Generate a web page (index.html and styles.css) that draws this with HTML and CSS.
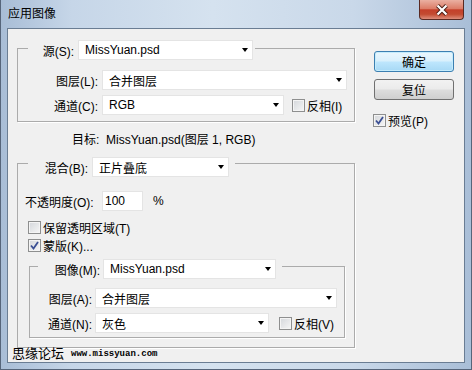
FILE: index.html
```html
<!DOCTYPE html>
<html lang="zh-CN">
<head>
    <meta charset="UTF-8">
    <meta name="viewport" content="width=device-width, initial-scale=1.0">
    <title>应用图像</title>
    <link rel="stylesheet" href="styles.css">
</head>
<body>

    <div class="window">
        <div class="titlebar">
            <span class="title">应用图像</span>
            <div class="close-btn">
                <svg width="14" height="12" viewBox="0 0 14 12">
                    <path d="M2.5 1.5 L11.5 10.5 M11.5 1.5 L2.5 10.5" stroke="#4a1f16" stroke-width="4"/>
                    <path d="M2.5 1.5 L11.5 10.5 M11.5 1.5 L2.5 10.5" stroke="#fff" stroke-width="2.2"/>
                </svg>
            </div>
        </div>

        <div class="frame">
            <div class="client">
                <div class="main">
                    <!-- 源 -->
                    <fieldset class="group group-source">
                        <legend class="legend-source">
                            <label class="legend-label label-source">源(S):</label>
                            <div class="dropdown dd-source"><span>MissYuan.psd</span></div>
                        </legend>
                        <div class="row">
                            <label class="row-label label-wide">图层(L):</label>
                            <div class="dropdown dd-layer"><span>合并图层</span></div>
                        </div>
                        <div class="row">
                            <label class="row-label label-wide">通道(C):</label>
                            <div class="dropdown dd-channel"><span>RGB</span></div>
                            <span class="checkbox"></span>
                            <span class="check-text">反相(I)</span>
                        </div>
                    </fieldset>

                    <div class="target">目标:&nbsp; MissYuan.psd(图层 1, RGB)</div>

                    <!-- 混合 -->
                    <fieldset class="group group-blend">
                        <legend class="legend-blend">
                            <label class="legend-label label-blend">混合(B):</label>
                            <div class="dropdown dd-blend"><span>正片叠底</span></div>
                        </legend>
                        <div class="row">
                            <label class="opacity-label">不透明度(O):</label>
                            <div class="textbox">100</div>
                            <span class="unit">%</span>
                        </div>
                        <div class="check-row">
                            <span class="checkbox"></span>
                            <span class="check-text">保留透明区域(T)</span>
                        </div>
                        <div class="check-row">
                            <span class="checkbox checked">
                                <svg width="9" height="9" viewBox="0 0 9 9"><path d="M1 4.5 L3.5 7.5 L8 1" fill="none" stroke="#3b4f94" stroke-width="1.8"/></svg>
                            </span>
                            <span class="check-text">蒙版(K)...</span>
                        </div>

                        <!-- 蒙版 -->
                        <fieldset class="group group-mask">
                            <legend class="legend-mask">
                                <label class="legend-label label-mask">图像(M):</label>
                                <div class="dropdown dd-image"><span>MissYuan.psd</span></div>
                            </legend>
                            <div class="row">
                                <label class="row-label label-narrow">图层(A):</label>
                                <div class="dropdown dd-mlayer"><span>合并图层</span></div>
                            </div>
                            <div class="row">
                                <label class="row-label label-narrow">通道(N):</label>
                                <div class="dropdown dd-mchannel"><span>灰色</span></div>
                                <span class="checkbox"></span>
                                <span class="check-text">反相(V)</span>
                            </div>
                        </fieldset>
                    </fieldset>
                </div>

                <div class="side">
                    <button class="btn btn-default">确定</button>
                    <button class="btn">复位</button>
                    <div class="check-row preview-row">
                        <span class="checkbox checked">
                            <svg width="9" height="9" viewBox="0 0 9 9"><path d="M1 4.5 L3.5 7.5 L8 1" fill="none" stroke="#3b4f94" stroke-width="1.8"/></svg>
                        </span>
                        <span class="check-text">预览(P)</span>
                    </div>
                </div>

                <!-- 水印 -->
                <div class="watermark">
                    <span class="wm-cn">思缘论坛</span>
                    <span class="wm-url">www.missyuan.com</span>
                </div>
            </div>
        </div>
    </div>

</body>
</html>
```

FILE: styles.css
```css
* {
    box-sizing: border-box;
}
body {
    margin: 0;
    font-family: "Liberation Sans", "Noto Sans CJK SC", sans-serif;
    font-size: 12px;
    color: #000;
}
.window {
    width: 472px;
    height: 370px;
    display: flex;
    flex-direction: column;
    background: linear-gradient(to right, #a8bdd6, #c6d6e8 15%, #d5e2ef 45%, #c9d8e9 75%, #a9bed7);
    border: 1px solid #56657a;
    border-top: none;
}
.titlebar {
    height: 28px;
    display: flex;
    align-items: center;
    padding-left: 7px;
    position: relative;
}
.title {
    font-size: 12px;
    line-height: 14px;
}
.close-btn {
    position: absolute;
    top: 0;
    right: 7px;
    width: 45px;
    height: 20px;
    border: 1px solid #5a2a22;
    border-top: none;
    border-radius: 0 0 4px 4px;
    background: linear-gradient(#eab0a2, #dc7d68 45%, #c4402a 52%, #c34b31 75%, #dd8d7a);
    display: flex;
    align-items: center;
    justify-content: center;
}
.frame {
    flex: 1;
    padding: 0 6px 6px 6px;
}
.client {
    height: 100%;
    border: 1px solid #6a7d93;
    background-color: #f0f0f0;
    display: flex;
    position: relative;
}
.main {
    width: 366px;
    padding: 7px 0 0 9px;
}
.group {
    margin: 0;
    padding: 0;
    border: 1px solid #ababab;
    box-shadow: 1px 1px 0 #fff;
    min-inline-size: 0;
}
legend {
    display: flex;
    align-items: center;
    padding: 0;
}
.legend-label {
    text-align: right;
}
.row {
    display: flex;
    align-items: center;
    height: 20px;
}
.row + .row {
    margin-top: 5px;
}
.row-label {
    text-align: right;
    margin-right: 4px;
}
.dropdown {
    display: flex;
    align-items: center;
    height: 20px;
    background-color: #fff;
    border: 1px solid #e4e4e4;
    padding-left: 6px;
}
.dropdown::after {
    content: "";
    margin-left: auto;
    margin-right: 4px;
    border-left: 3.5px solid transparent;
    border-right: 3.5px solid transparent;
    border-top: 4px solid #000;
}
.checkbox {
    width: 13px;
    height: 13px;
    border: 1px solid #8e8f8f;
    background: linear-gradient(135deg, #d4d7db, #f6f6f6);
    box-shadow: inset 0 0 0 1px #f4f4f4;
    display: inline-flex;
    align-items: center;
    justify-content: center;
}
.check-text {
    margin-left: 2px;
}
.check-row {
    display: flex;
    align-items: center;
    height: 15px;
}

/* 源 */
.group-source {
    width: 338px;
    padding: 10px 0 6px 0;
}
.legend-source {
    margin-left: 10px;
    padding: 4px 2px 0 0;
}
.label-source {
    width: 46px;
    margin-right: 4px;
}
.label-wide {
    width: 80px;
}
.dd-source { width: 175px; }
.dd-layer { width: 245px; }
.dd-channel { width: 182px; }
.group-source .checkbox {
    margin-left: 8px;
}

.target {
    margin: 10px 0 1px 55px;
    line-height: 16px;
}

/* 混合 */
.group-blend {
    width: 338px;
    padding: 14px 9px 9px 7px;
}
.legend-blend {
    margin-left: 3px;
    padding: 8px 6px 0 0;
}
.label-blend {
    width: 60px;
    margin-right: 4px;
}
.dd-blend { width: 137px; }
.opacity-label {
    width: 77px;
}
.textbox {
    width: 41px;
    height: 20px;
    background-color: #fff;
    border: 1px solid #e4e4e4;
    padding-left: 2px;
    display: flex;
    align-items: center;
}
.unit {
    margin-left: 10px;
}
.group-blend > .check-row {
    margin-left: 3px;
}
.group-blend > .row + .check-row {
    margin-top: 9px;
}
.check-row + .check-row {
    margin-top: 3px;
}

/* 蒙版 */
.group-mask {
    width: 316px;
    margin-left: 4px;
    padding: 9px 0 4px 0;
}
.legend-mask {
    margin-left: 8px;
    padding: 6px 6px 0 0;
}
.label-mask {
    width: 62px;
    margin-right: 3px;
}
.label-narrow {
    width: 62px;
    margin-right: 3px;
}
.dd-image { width: 173px; }
.dd-mlayer { width: 242px; }
.dd-mchannel { width: 174px; }
.group-mask .checkbox {
    margin-left: 10px;
}

/* 右侧按钮 */
.side {
    width: 80px;
    padding-top: 22px;
    display: flex;
    flex-direction: column;
}
.btn {
    width: 80px;
    height: 21px;
    padding: 0;
    font-family: "Liberation Sans", "Noto Sans CJK SC", sans-serif;
    font-size: 12px;
    color: #000;
    border: 1px solid #707070;
    border-radius: 3px;
    background: linear-gradient(#f2f2f2, #ebebeb 48%, #dddddd 52%, #cfcfcf);
}
.btn + .btn {
    margin-top: 7px;
}
.btn-default {
    border-color: #3c7fb1;
    background: linear-gradient(#eaf6fd, #d9f0fc 48%, #bee6fd 52%, #a7d9f5);
    box-shadow: inset 0 0 0 1px #c5ecfc;
}
.preview-row {
    margin-top: 13px;
    margin-left: -1px;
}

.watermark {
    position: absolute;
    left: 4px;
    bottom: 1px;
    display: flex;
    align-items: center;
}
.wm-cn {
    font-size: 13px;
    line-height: 15px;
}
.wm-url {
    margin-left: 7px;
    font-family: "Liberation Mono", monospace;
    font-size: 9px;
    font-weight: bold;
}
```
